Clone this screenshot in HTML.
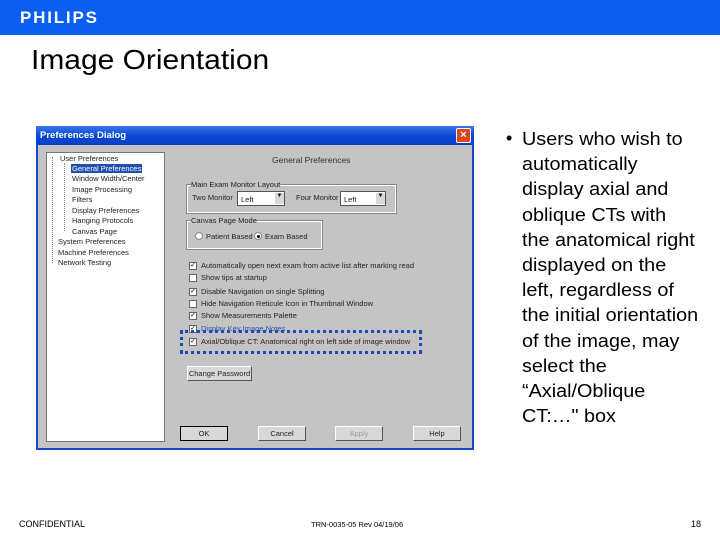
<!DOCTYPE html><html><head><style>
*{margin:0;padding:0;box-sizing:border-box}
body{width:720px;height:540px;background:#fff;position:relative;overflow:hidden;font-family:"Liberation Sans",sans-serif}
.a{position:absolute;white-space:nowrap}
.s{font-size:7.5px;color:#222}
.cb{position:absolute;width:8px;height:8px;background:#fff;border:1px solid #666;font-size:7px;line-height:6px;text-align:center;color:#000}
.btn{position:absolute;height:15px;background:#d8d8d8;border:1px solid #555;border-top-color:#fff;border-left-color:#fff;font-size:7.5px;text-align:center;line-height:13px;color:#222}
.grp{position:absolute;border:1px solid #fff;outline:1px solid #888}
</style></head><body>
<div class="a" style="left:0;top:0;width:720px;height:35px;background:#0b5ff0"></div>
<div class="a" style="left:20px;top:8px;color:#fff;font-weight:bold;font-size:17px;letter-spacing:1.8px">PHILIPS</div>
<div class="a" style="left:31px;top:44px;font-size:28px;color:#000;transform:scaleX(1.07);transform-origin:left">Image Orientation</div>

<div class="a" style="left:36px;top:126px;width:438px;height:324px;background:#c4c4c4;border:2px solid #1848c8"></div>
<div class="a" style="left:36px;top:126px;width:438px;height:19px;background:linear-gradient(#3a78e8,#0a48d8 50%,#0840c0)"></div>
<div class="a" style="left:40px;top:130px;color:#fff;font-size:9.5px;font-weight:bold">Preferences Dialog</div>
<div class="a" style="left:456px;top:128px;width:15px;height:15px;background:#d84820;border:1px solid #fff;border-radius:2px;color:#fff;font-size:11px;line-height:13px;text-align:center;font-weight:bold">×</div>

<div class="a" style="left:46px;top:152px;width:119px;height:290px;background:#fff;border:1px solid #777"></div>
<div class="a s" style="left:60px;top:154px">User Preferences</div>
<div class="a s" style="left:71px;top:164px;background:#2050b0;color:#fff;padding:0 1px">General Preferences</div>
<div class="a s" style="left:72px;top:174px">Window Width/Center</div>
<div class="a s" style="left:72px;top:185px">Image Processing</div>
<div class="a s" style="left:72px;top:195px">Filters</div>
<div class="a s" style="left:72px;top:206px">Display Preferences</div>
<div class="a s" style="left:72px;top:216px">Hanging Protocols</div>
<div class="a s" style="left:72px;top:227px">Canvas Page</div>
<div class="a s" style="left:58px;top:237px">System Preferences</div>
<div class="a s" style="left:58px;top:248px">Machine Preferences</div>
<div class="a s" style="left:58px;top:258px">Network Testing</div>
<div class="a" style="left:52px;top:157px;width:0;height:106px;border-left:1px dotted #888"></div>
<div class="a" style="left:64px;top:163px;width:0;height:68px;border-left:1px dotted #888"></div>

<div class="a" style="left:272px;top:155px;font-size:8.5px;color:#333">General Preferences</div>
<div class="grp" style="left:187px;top:185px;width:209px;height:28px"></div>
<div class="a s" style="left:191px;top:180px;background:#c4c4c4">Main Exam Monitor Layout</div>
<div class="a s" style="left:192px;top:193px">Two Monitor</div>
<div class="a s" style="left:237px;top:191px;width:48px;height:15px;background:#fff;border:1px solid #555;padding:3px">Left</div>
<div class="a" style="left:275px;top:193px;width:9px;height:11px;background:#d8d8d8;font-size:6px;text-align:center">▼</div>
<div class="a s" style="left:296px;top:193px">Four Monitor</div>
<div class="a s" style="left:340px;top:191px;width:46px;height:15px;background:#fff;border:1px solid #555;padding:3px">Left</div>
<div class="a" style="left:376px;top:193px;width:9px;height:11px;background:#d8d8d8;font-size:6px;text-align:center">▼</div>

<div class="grp" style="left:187px;top:221px;width:135px;height:28px"></div>
<div class="a s" style="left:191px;top:216px;background:#c4c4c4">Canvas Page Mode</div>
<div class="a" style="left:195px;top:232px;width:8px;height:8px;border-radius:50%;background:#fff;border:1px solid #888"></div>
<div class="a s" style="left:206px;top:232px">Patient Based</div>
<div class="a" style="left:254px;top:232px;width:8px;height:8px;border-radius:50%;background:#fff;border:1px solid #888"><div style="width:3px;height:3px;background:#000;border-radius:50%;margin:1.5px"></div></div>
<div class="a s" style="left:265px;top:232px">Exam Based</div>

<div class="cb" style="left:189px;top:262px">✓</div><div class="a s" style="left:201px;top:261px">Automatically open next exam from active list after marking read</div>
<div class="cb" style="left:189px;top:274px"></div><div class="a s" style="left:201px;top:273px">Show tips at startup</div>
<div class="cb" style="left:189px;top:288px">✓</div><div class="a s" style="left:201px;top:287px">Disable Navigation on single Splitting</div>
<div class="cb" style="left:189px;top:300px"></div><div class="a s" style="left:201px;top:299px">Hide Navigation Reticule Icon in Thumbnail Window</div>
<div class="cb" style="left:189px;top:312px">✓</div><div class="a s" style="left:201px;top:311px">Show Measurements Palette</div>
<div class="cb" style="left:189px;top:325px">✓</div><div class="a s" style="left:201px;top:324px;color:#3050a0">Display Key Image Notes</div>
<div class="cb" style="left:189px;top:338px">✓</div><div class="a s" style="left:201px;top:337px">Axial/Oblique CT: Anatomical right on left side of image window</div>
<div class="a" style="left:180px;top:330px;width:242px;height:24px;border:3px dotted #2048c0"></div>

<div class="btn" style="left:187px;top:366px;width:65px">Change Password</div>
<div class="btn" style="left:180px;top:426px;width:48px;border:1px solid #000">OK</div>
<div class="btn" style="left:258px;top:426px;width:48px">Cancel</div>
<div class="btn" style="left:335px;top:426px;width:48px;color:#999">Apply</div>
<div class="btn" style="left:413px;top:426px;width:48px">Help</div>

<div class="a" style="left:506px;top:128px;font-size:18px">•</div>
<div class="a" style="left:522px;top:127px;font-size:18px;line-height:25.2px;color:#000;transform:scaleX(1.1);transform-origin:left">Users who wish to<br>automatically<br>display axial and<br>oblique CTs with<br>the anatomical right<br>displayed on the<br>left, regardless of<br>the initial orientation<br>of the image, may<br>select the<br>“Axial/Oblique<br>CT:…" box</div>

<div class="a" style="left:19px;top:519px;font-size:9px">CONFIDENTIAL</div>
<div class="a" style="left:311px;top:520px;font-size:7.5px">TRN-0035-05 Rev 04/19/06</div>
<div class="a" style="left:691px;top:519px;font-size:9px">18</div>
</body></html>
